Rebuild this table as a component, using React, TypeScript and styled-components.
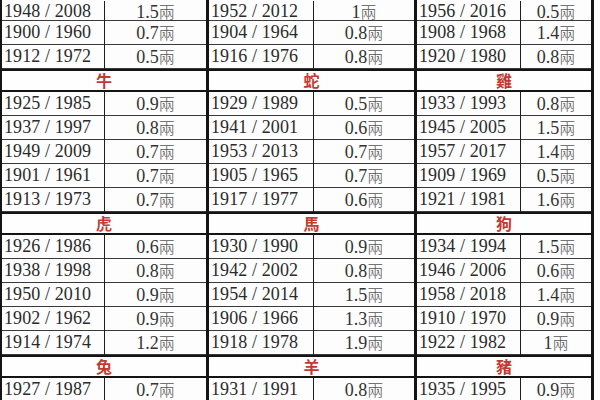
import React from "react";
import styled, { createGlobalStyle } from "styled-components";

const Global = createGlobalStyle`
  html, body { margin: 0; padding: 0; background: #fdfdfd; }
  body { width: 600px; height: 400px; overflow: hidden; }
`;

type Row = [string, string];
type Block = { header?: string; rows: Row[] };
type Group = { yearW: number; weightW: number; edge: number; right?: number; blocks: Block[] };

const groups: Group[] = [
  {
    yearW: 103,
    weightW: 101,
    edge: 2,
    blocks: [
      { rows: [["1948 / 2008", "1.5"], ["1900 / 1960", "0.7"], ["1912 / 1972", "0.5"]] },
      { header: "牛", rows: [["1925 / 1985", "0.9"], ["1937 / 1997", "0.8"], ["1949 / 2009", "0.7"], ["1901 / 1961", "0.7"], ["1913 / 1973", "0.7"]] },
      { header: "虎", rows: [["1926 / 1986", "0.6"], ["1938 / 1998", "0.8"], ["1950 / 2010", "0.9"], ["1902 / 1962", "0.9"], ["1914 / 1974", "1.2"]] },
      { header: "兔", rows: [["1927 / 1987", "0.7"]] },
    ],
  },
  {
    yearW: 105,
    weightW: 100,
    edge: 3,
    blocks: [
      { rows: [["1952 / 2012", "1"], ["1904 / 1964", "0.8"], ["1916 / 1976", "0.8"]] },
      { header: "蛇", rows: [["1929 / 1989", "0.5"], ["1941 / 2001", "0.6"], ["1953 / 2013", "0.7"], ["1905 / 1965", "0.7"], ["1917 / 1977", "0.6"]] },
      { header: "馬", rows: [["1930 / 1990", "0.9"], ["1942 / 2002", "0.8"], ["1954 / 2014", "1.5"], ["1906 / 1966", "1.3"], ["1918 / 1978", "1.9"]] },
      { header: "羊", rows: [["1931 / 1991", "0.8"]] },
    ],
  },
  {
    yearW: 104,
    weightW: 70,
    edge: 3,
    right: 3,
    blocks: [
      { rows: [["1956 / 2016", "0.5"], ["1908 / 1968", "1.4"], ["1920 / 1980", "0.8"]] },
      { header: "雞", rows: [["1933 / 1993", "0.8"], ["1945 / 2005", "1.5"], ["1957 / 2017", "1.4"], ["1909 / 1969", "0.5"], ["1921 / 1981", "1.6"]] },
      { header: "狗", rows: [["1934 / 1994", "1.5"], ["1946 / 2006", "0.6"], ["1958 / 2018", "1.4"], ["1910 / 1970", "0.9"], ["1922 / 1982", "1"]] },
      { header: "豬", rows: [["1935 / 1995", "0.9"]] },
    ],
  },
];

const Sheet = styled.div`
  display: flex;
  align-items: flex-start;
  font-family: "Liberation Serif", "Noto Sans CJK TC", serif;
  color: #2b2b2b;
`;

const Column = styled.div<{ $edge: number; $right?: number }>`
  display: flex;
  flex-direction: column;
  border-left: ${(p) => p.$edge}px solid #141414;
  border-right: ${(p) => (p.$right ? `${p.$right}px solid #141414` : "none")};
`;

const DataRow = styled.div<{ $yearW: number; $weightW: number; $first?: boolean }>`
  display: grid;
  grid-template-columns: ${(p) => p.$yearW}px ${(p) => p.$weightW}px;
  height: ${(p) => (p.$first ? 19 : 23)}px;
  padding-top: ${(p) => (p.$first ? 1 : 0)}px;
  line-height: ${(p) => (p.$first ? 20 : 23)}px;
  border-bottom: 1px solid #3a3a3a;
`;

const Year = styled.div`
  font-size: 18px;
  padding-left: 2px;
  border-right: 1px solid #1e1e1e;
  white-space: nowrap;
  letter-spacing: 0.1px;
`;

const Weight = styled.div`
  font-size: 18px;
  text-align: center;
  white-space: nowrap;
  color: #333;
`;

const Unit = styled.span`
  font-family: "Noto Sans CJK TC", sans-serif;
  font-size: 16px;
  color: #555;
  font-weight: 300;
`;

const Header = styled.div`
  height: 19px;
  line-height: 19px;
  border-top: 2px solid #141414;
  border-bottom: 2px solid #141414;
  text-align: center;
  font-family: "Noto Sans CJK TC", sans-serif;
  font-weight: 700;
  font-size: 16px;
  color: #c33a33;
  background: #fefefe;
`;

export default function App() {
  return (
    <>
      <Global />
      <Sheet>
        {groups.map((g, gi) => (
          <Column key={gi} $edge={g.edge} $right={g.right}>
            {g.blocks.map((b, bi) => (
              <React.Fragment key={bi}>
                {b.header && <Header>{b.header}</Header>}
                {b.rows.map(([y, w], ri) => (
                  <DataRow key={ri} $yearW={g.yearW} $weightW={g.weightW} $first={bi === 0 && ri === 0}>
                    <Year>{y}</Year>
                    <Weight>
                      {w}
                      <Unit>兩</Unit>
                    </Weight>
                  </DataRow>
                ))}
              </React.Fragment>
            ))}
          </Column>
        ))}
      </Sheet>
    </>
  );
}
